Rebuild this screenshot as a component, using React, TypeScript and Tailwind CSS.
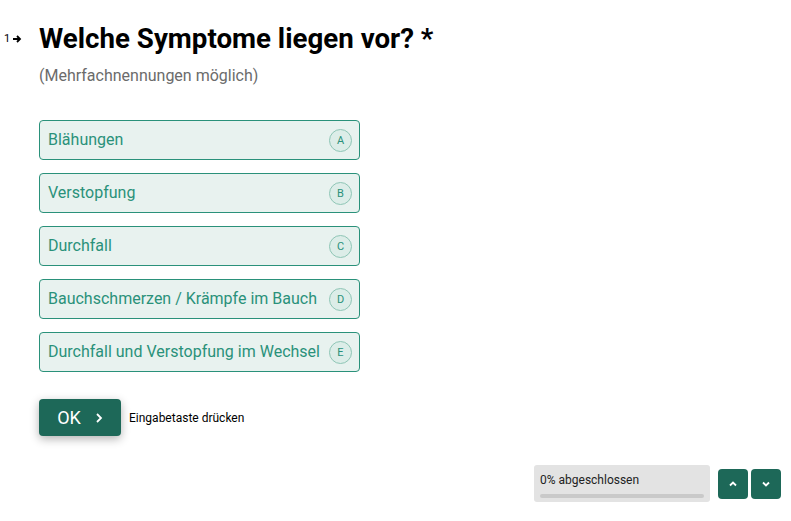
import React from "react";

const options = [
  { label: "Blähungen", key: "A" },
  { label: "Verstopfung", key: "B" },
  { label: "Durchfall", key: "C" },
  { label: "Bauchschmerzen / Krämpfe im Bauch", key: "D" },
  { label: "Durchfall und Verstopfung im Wechsel", key: "E" },
];

export default function App() {
  return (
    <div className="w-[791px] h-[521px] bg-white overflow-hidden" style={{ fontFamily: "Roboto, 'Liberation Sans', sans-serif" }}>
      <div className="flex flex-col pt-[21px]">
        <div className="flex items-start pl-[4px]">
          <div className="w-[35px] flex items-center gap-[2px] text-[11px] text-black pt-[12px] leading-none">
            <span>1</span>
            <svg width="10" height="10" viewBox="0 0 10 10" className="mt-[1px]">
              <path d="M1 5 H8 M5 2 L8 5 L5 8" stroke="black" strokeWidth="1.8" fill="none" />
            </svg>
          </div>
          <h1 className="text-[27.7px] font-bold leading-[36px] text-black">Welche Symptome liegen vor? *</h1>
        </div>
        <p className="pl-[39px] mt-[9px] text-[16px] leading-[20px] text-[#6b6b6b]">(Mehrfachnennungen möglich)</p>
        <div className="pl-[39px] mt-[34px] flex flex-col gap-[13px]">
          {options.map((o) => (
            <div
              key={o.key}
              className="w-[321px] h-[40px] border border-[#2a917a] rounded-[4px] bg-[#e8f2ef] flex items-center justify-between pl-[8px] pr-[7px]"
            >
              <span className="text-[16px] text-[#2a917a] leading-none">{o.label}</span>
              <span className="w-[23px] h-[23px] rounded-full border border-[#8fc6b6] bg-[#dcede8] flex items-center justify-center text-[11px] text-[#2a917a] leading-none pt-[1px]">
                {o.key}
              </span>
            </div>
          ))}
        </div>
        <div className="pl-[39px] mt-[27px] flex items-center gap-[8px]">
          <button className="w-[82px] h-[37px] rounded-[4px] bg-[#1d6858] text-white flex items-center justify-center gap-[14px] shadow-[0_3px_10px_rgba(0,0,0,0.3)]">
            <span className="text-[18px] leading-none">OK</span>
            <svg width="8" height="12" viewBox="0 0 8 12">
              <path d="M2 2 L6 6 L2 10" stroke="white" strokeWidth="1.8" fill="none" />
            </svg>
          </button>
          <span className="text-[12px] text-black">Eingabetaste drücken</span>
        </div>
        <div className="mt-[29px] flex justify-end pr-[10px] items-center gap-[8px]">
          <div className="w-[176px] h-[37px] rounded-[3px] bg-[#e3e3e3] px-[6px] pt-[8px] flex flex-col">
            <span className="text-[12px] leading-[14px] text-[#222]">0% abgeschlossen</span>
            <div className="mt-[7px] h-[4px] bg-[#c9c9c9] rounded-full" />
          </div>
          <div className="flex gap-[3px]">
            <button className="w-[30px] h-[30px] rounded-[4px] bg-[#1d6858] flex items-center justify-center">
              <svg width="10" height="8" viewBox="0 0 10 8">
                <path d="M2 5.5 L5 2.5 L8 5.5" stroke="white" strokeWidth="1.8" fill="none" />
              </svg>
            </button>
            <button className="w-[30px] h-[30px] rounded-[4px] bg-[#1d6858] flex items-center justify-center">
              <svg width="10" height="8" viewBox="0 0 10 8">
                <path d="M2 2.5 L5 5.5 L8 2.5" stroke="white" strokeWidth="1.8" fill="none" />
              </svg>
            </button>
          </div>
        </div>
      </div>
    </div>
  );
}
